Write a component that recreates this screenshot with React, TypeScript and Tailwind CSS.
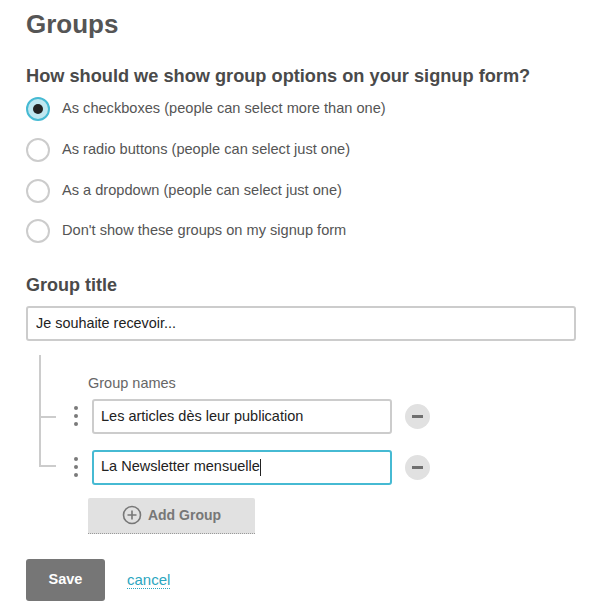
import { useState } from 'react';

const options = [
  'As checkboxes (people can select more than one)',
  'As radio buttons (people can select just one)',
  'As a dropdown (people can select just one)',
  "Don't show these groups on my signup form",
];

const Radio = ({ checked }: { checked: boolean }) => (
  <span
    className={`w-[24px] h-[24px] rounded-full flex items-center justify-center shrink-0 border-2 ${
      checked ? 'bg-[#bfe7f0] border-[#46bad3]' : 'bg-white border-[#cccccc]'
    }`}
  >
    {checked && <span className="w-[10px] h-[10px] rounded-full bg-[#222]" />}
  </span>
);

const Grip = () => (
  <span className="w-[10px] flex flex-col items-center gap-[4px] shrink-0">
    <span className="w-[4px] h-[4px] rounded-full bg-[#7a7a7a]" />
    <span className="w-[4px] h-[4px] rounded-full bg-[#7a7a7a]" />
    <span className="w-[4px] h-[4px] rounded-full bg-[#7a7a7a]" />
  </span>
);

const RemoveButton = () => (
  <button className="ml-[13px] w-[25px] h-[25px] rounded-full bg-[#e1e1e1] flex items-center justify-center shrink-0">
    <span className="w-[11px] h-[3px] bg-[#6f6f6f]" />
  </button>
);

export default function App() {
  const [selected, setSelected] = useState(0);

  return (
    <div
      className="w-[598px] h-[611px] bg-white px-[26px] pt-[6px] text-[#555]"
      style={{ fontFamily: '"Liberation Sans", Arial, sans-serif' }}
    >
      <h1 className="text-[26px] font-bold leading-[36px] text-[#555]">Groups</h1>

      <h2 className="mt-[24px] text-[18.2px] font-bold leading-[20px] text-[#4a4a4a]">
        How should we show group options on your signup form?
      </h2>

      <div className="mt-[3px] flex flex-col">
        {options.map((label, i) => (
          <label
            key={label}
            onClick={() => setSelected(i)}
            className="h-[40.7px] flex items-center gap-[12px] cursor-pointer"
          >
            <Radio checked={selected === i} />
            <span className="text-[14.6px] text-[#555]">{label}</span>
          </label>
        ))}
      </div>

      <h3 className="mt-[23px] text-[18px] font-bold leading-[20px] text-[#4a4a4a]">Group title</h3>

      <input
        className="mt-[11px] w-[550px] h-[35px] border-2 border-[#cccccc] rounded-[3px] px-[8px] text-[14.4px] text-[#222] outline-none"
        defaultValue="Je souhaite recevoir..."
      />

      {/* group names tree */}
      <div className="mt-[14px] ml-[13px] flex flex-col">
        <div className="flex">
          <div className="w-[17px] border-l-2 border-[#cccccc] shrink-0" />
          <div className="ml-[32px] pt-[19px] text-[14.5px] leading-[18px] text-[#666]">Group names</div>
        </div>

        <div className="flex">
          <div className="w-[17px] h-[42px] border-l-2 border-[#cccccc] shrink-0 flex flex-col">
            <div className="h-[24px]" />
            <div className="h-[2px] bg-[#cccccc]" />
          </div>
          <div className="pt-[7px] flex items-center">
            <div className="ml-[15px] w-[10px]">
              <Grip />
            </div>
            <input
              className="ml-[11px] w-[300px] h-[35px] border-2 border-[#cccccc] rounded-[3px] px-[7px] text-[14.5px] text-[#222] outline-none"
              defaultValue="Les articles dès leur publication"
            />
            <RemoveButton />
          </div>
        </div>

        <div className="flex">
          <div className="w-[17px] h-[33px] border-l-2 border-b-2 border-[#cccccc] shrink-0" />
          <div className="pt-[16px] flex items-center">
            <div className="ml-[15px] w-[10px]">
              <Grip />
            </div>
            <div className="ml-[11px] w-[300px] h-[35px] border-2 border-[#46bad3] rounded-[3px] px-[7px] text-[14.5px] text-[#222] flex items-center">
              La Newsletter mensuelle
              <span className="w-[1px] h-[17px] bg-[#222]" />
            </div>
            <RemoveButton />
          </div>
        </div>

        <button className="mt-[13px] ml-[49px] w-[167px] h-[36px] bg-[#e1e1e1] border-b border-dotted border-[#999] rounded-t-[2px] flex items-center justify-center gap-[6px] text-[14px] font-bold text-[#777]">
          <svg width="20" height="20" viewBox="0 0 20 20" fill="none" stroke="#777" strokeWidth="1.6">
            <circle cx="10" cy="10" r="8.5" />
            <path d="M10 5.5v9M5.5 10h9" />
          </svg>
          Add Group
        </button>
      </div>

      <div className="mt-[25px] flex items-center gap-[22px]">
        <button className="w-[79px] h-[42px] rounded-[3px] bg-[#767676] text-white text-[14.5px] font-bold">
          Save
        </button>
        <a className="text-[15px] text-[#2ba6c0] border-b border-dotted border-[#2ba6c0] leading-[17px] cursor-pointer">
          cancel
        </a>
      </div>
    </div>
  );
}
